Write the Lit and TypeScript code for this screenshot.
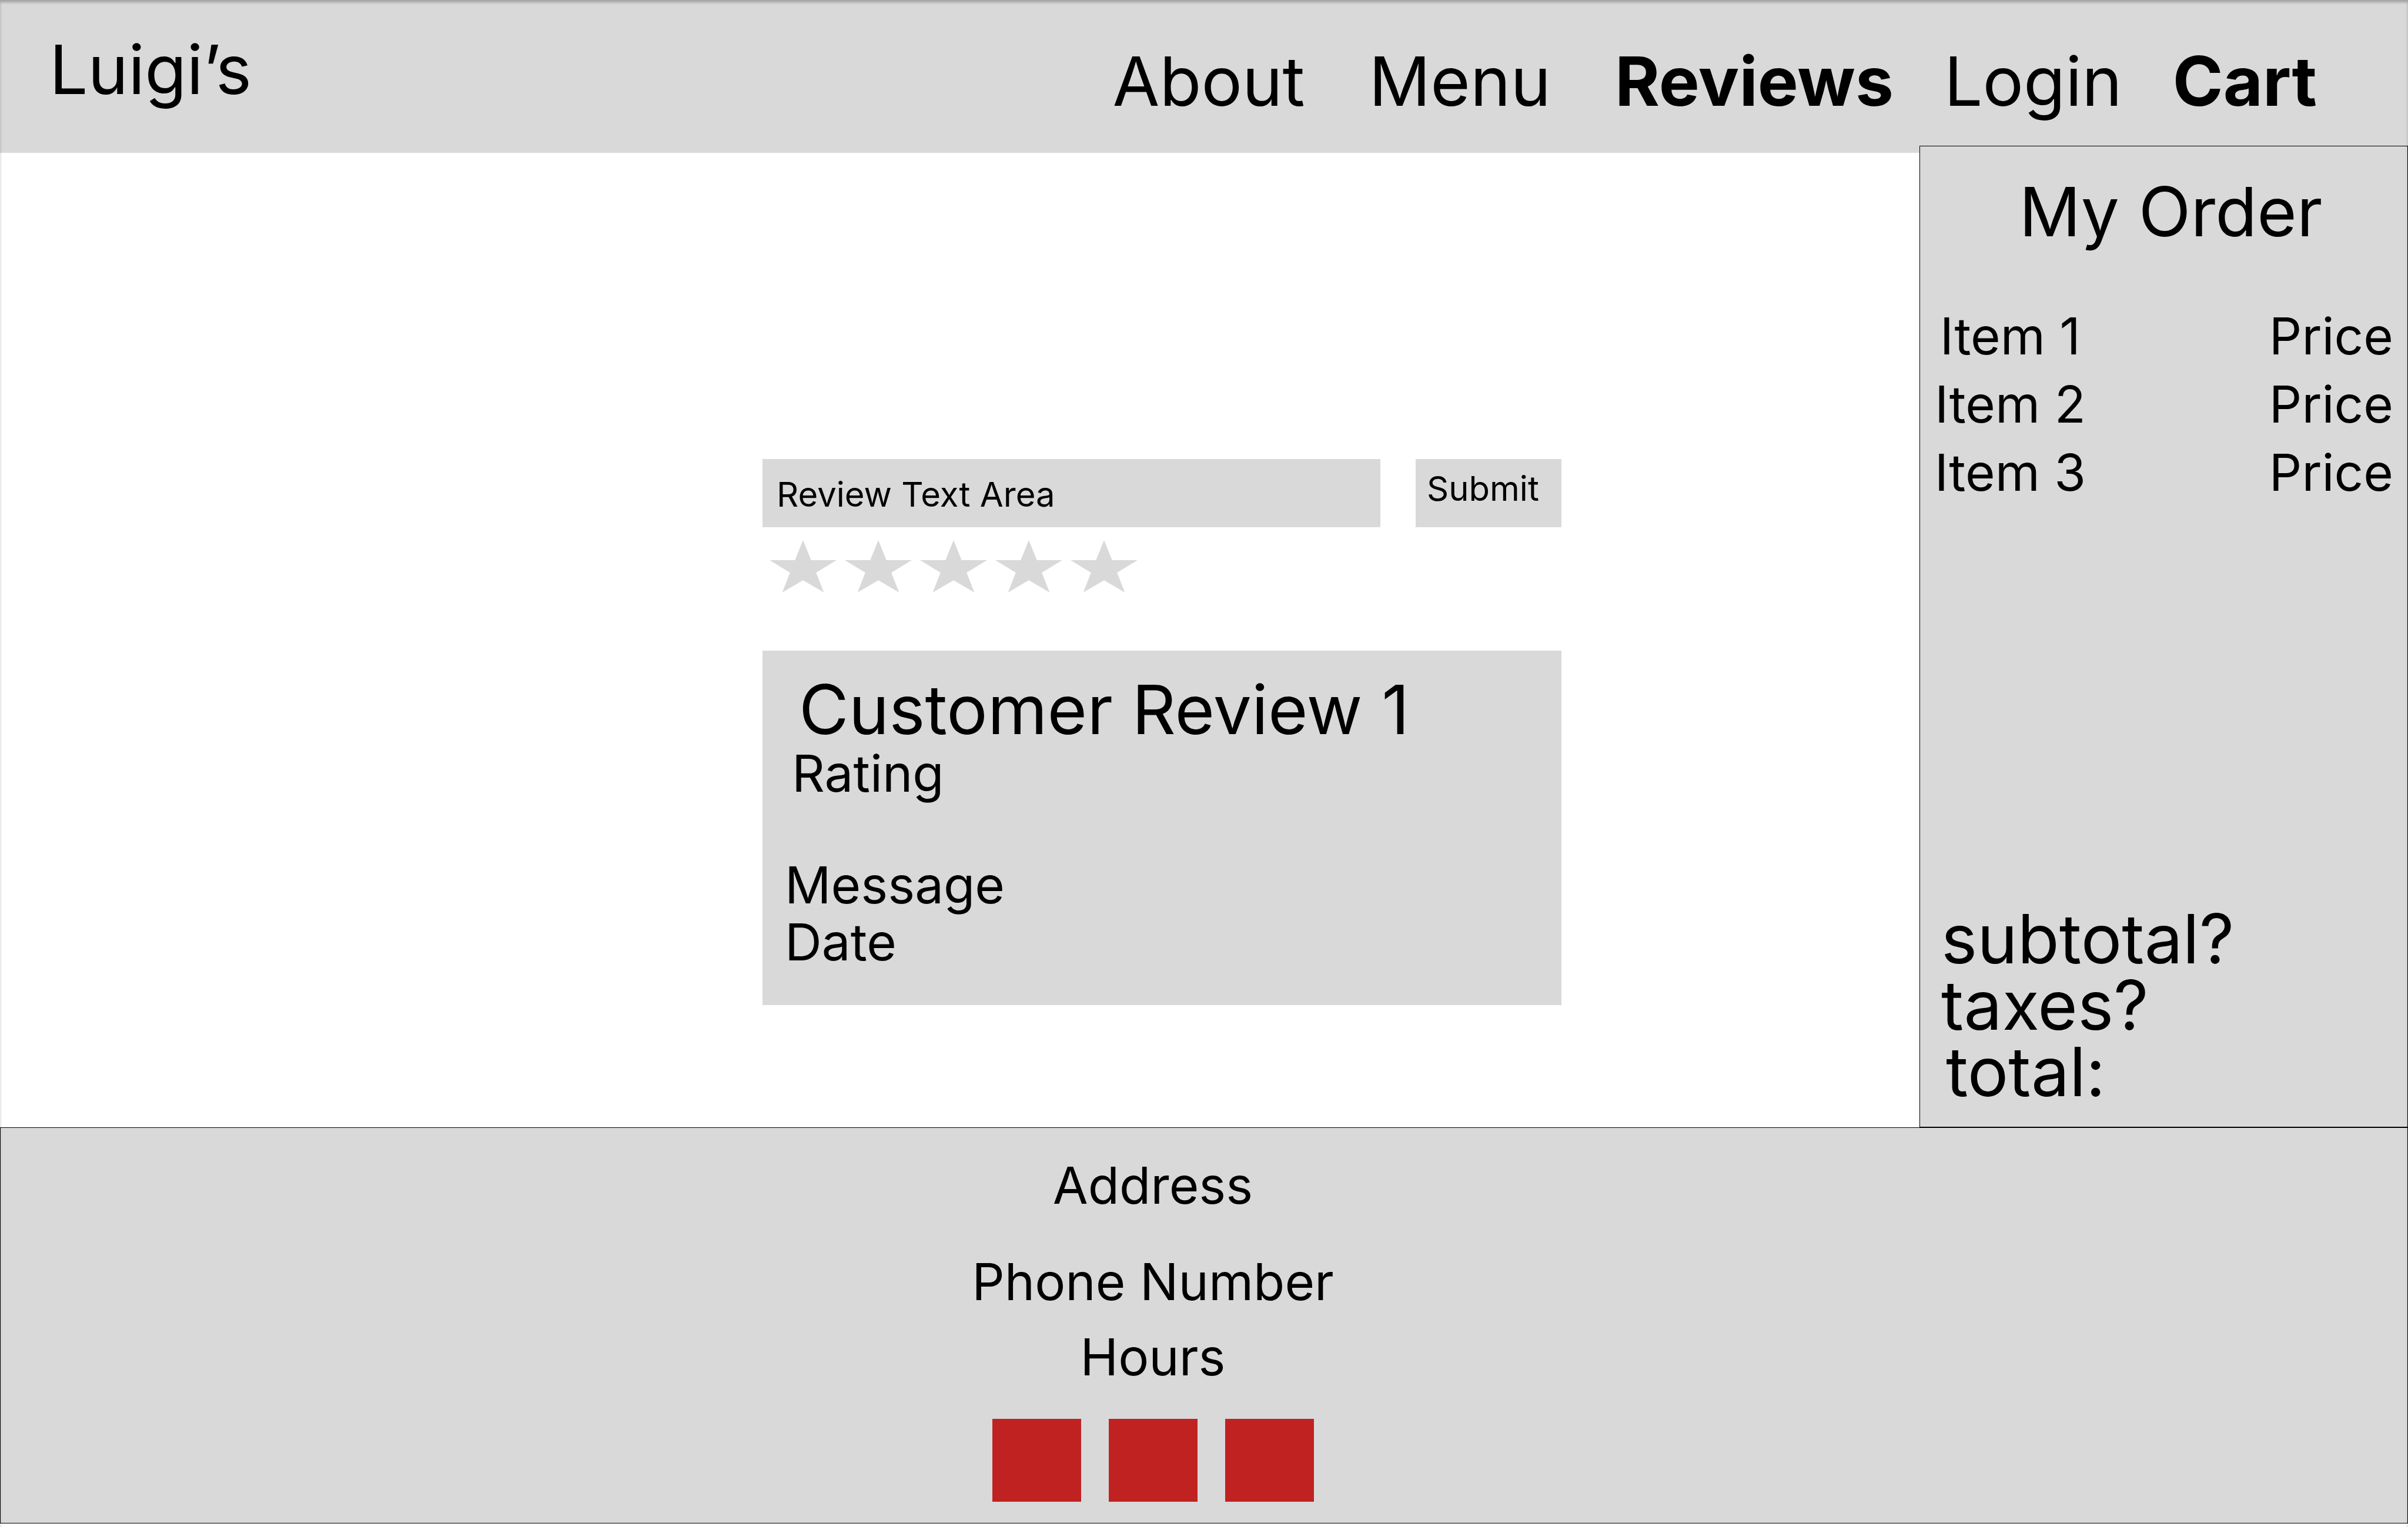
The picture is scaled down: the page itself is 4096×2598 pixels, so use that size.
import { LitElement, html, css } from "lit";
import { customElement, state } from "lit/decorators.js";

const INK = css`#000`;
const PANEL = css`#d9d9d9`;

@customElement("site-header")
export class SiteHeader extends LitElement {
  static styles = css`
    :host {
      display: block;
      background: ${PANEL};
    }
    .bar {
      display: flex;
      justify-content: space-between;
      align-items: flex-start;
      min-height: 260px;
      box-sizing: border-box;
      padding: 0 155px 0 84px;
      font-size: 116px;
      line-height: 140px;
    }
    .brand {
      margin: 0;
      padding-top: 48px;
      font: inherit;
    }
    .nav {
      display: flex;
      gap: 86px;
      padding-top: 68px;
    }
    .pages {
      display: flex;
      gap: 109px;
    }
    .link {
      color: ${INK};
      text-decoration: none;
    }
    .current {
      font-weight: 700;
    }
  `;

  render() {
    return html`
      <header class="bar">
        <h1 class="brand">Luigi’s</h1>
        <nav class="nav">
          <div class="pages">
            <a class="link" href="#about">About</a>
            <a class="link" href="#menu">Menu</a>
            <a class="link current" href="#reviews" aria-current="page">Reviews</a>
          </div>
          <a class="link" href="#login">Login</a>
          <a class="link current" href="#cart">Cart</a>
        </nav>
      </header>
    `;
  }
}

@customElement("review-form")
export class ReviewForm extends LitElement {
  @state() private rating = 0;

  static styles = css`
    :host {
      display: block;
    }
    .form {
      display: flex;
      flex-direction: column;
      gap: 22px;
      margin: 0;
    }
    .entry {
      display: grid;
      grid-template-columns: minmax(0, 1fr) 248px;
      gap: 60px;
    }
    .message,
    .submit {
      box-sizing: border-box;
      height: 116px;
      margin: 0;
      border: 0;
      border-radius: 0;
      background: ${PANEL};
      color: ${INK};
      font: inherit;
      font-size: 58px;
      line-height: 96px;
    }
    .message {
      width: 100%;
      padding: 12px 24px 8px;
      resize: none;
      overflow: hidden;
    }
    .message::placeholder {
      color: ${INK};
      opacity: 1;
    }
    .submit {
      padding: 2px 19px 18px;
      text-align: left;
      cursor: pointer;
    }
    .stars {
      display: flex;
      gap: 14px;
      margin: 0;
      padding: 0 12px;
      border: 0;
    }
    .star {
      appearance: none;
      flex: none;
      width: 114px;
      height: 89px;
      margin: 0;
      background: ${PANEL};
      clip-path: polygon(
        50% 0,
        62% 38.2%,
        100% 38.2%,
        69.5% 62%,
        81% 100%,
        50% 76.6%,
        19% 100%,
        30.5% 62%,
        0 38.2%,
        38% 38.2%
      );
      cursor: pointer;
    }
    .star.on {
      background: #8c8c8c;
    }
  `;

  render() {
    return html`
      <form class="form" @submit=${(e: Event) => e.preventDefault()}>
        <div class="entry">
          <textarea
            class="message"
            rows="1"
            aria-label="Review Text Area"
            placeholder="Review Text Area"
          ></textarea>
          <button class="submit" type="submit">Submit</button>
        </div>
        <fieldset class="stars" aria-label="Rating">
          ${[1, 2, 3, 4, 5].map(
            (n) => html`
              <input
                class="star ${n <= this.rating ? "on" : ""}"
                type="radio"
                name="rating"
                value=${n}
                aria-label="Rating ${n}"
                @change=${() => (this.rating = n)}
              />
            `
          )}
        </fieldset>
      </form>
    `;
  }
}

@customElement("review-card")
export class ReviewCard extends LitElement {
  static styles = css`
    :host {
      display: block;
      background: ${PANEL};
    }
    .card {
      padding: 40px 38px 59px;
      font-size: 87px;
      line-height: 97px;
    }
    .title {
      margin: 0;
      padding-left: 24px;
      font-weight: 400;
      font-size: 116px;
      line-height: 120px;
    }
    .rating {
      margin: 0 0 93px;
      padding-left: 12px;
    }
    .text {
      margin: 0;
    }
  `;

  render() {
    return html`
      <article class="card">
        <h2 class="title">Customer Review 1</h2>
        <p class="rating">Rating</p>
        <p class="text">Message</p>
        <p class="text">Date</p>
      </article>
    `;
  }
}

@customElement("order-panel")
export class OrderPanel extends LitElement {
  static styles = css`
    :host {
      display: flex;
      flex-direction: column;
      box-sizing: border-box;
      border: 1px solid ${INK};
      background: ${PANEL};
      padding: 41px 0 37px;
    }
    .title {
      margin: 0 0 84px;
      padding-left: 24px;
      text-align: center;
      font-weight: 400;
      font-size: 116px;
      line-height: 140px;
    }
    .items {
      width: 100%;
      border-collapse: collapse;
      font-size: 87px;
      line-height: 116px;
    }
    .name,
    .price {
      padding: 0;
      font-weight: 400;
    }
    .name {
      width: 37%;
      text-align: center;
    }
    .price {
      padding-right: 24px;
      text-align: right;
    }
    .totals {
      margin-top: auto;
      padding-left: 36px;
      font-size: 116px;
      line-height: 113px;
    }
    .line {
      margin: 0;
    }
    .total {
      padding-left: 8px;
    }
  `;

  private items = ["Item 1", "Item 2", "Item 3"];

  render() {
    return html`
      <h2 class="title">My Order</h2>
      <table class="items">
        <tbody>
          ${this.items.map(
            (item) => html`
              <tr>
                <th class="name" scope="row">${item}</th>
                <td class="price">Price</td>
              </tr>
            `
          )}
        </tbody>
      </table>
      <div class="totals">
        <p class="line">subtotal?</p>
        <p class="line">taxes?</p>
        <p class="line total">total:</p>
      </div>
    `;
  }
}

@customElement("site-footer")
export class SiteFooter extends LitElement {
  static styles = css`
    :host {
      display: block;
      border: 1px solid ${INK};
      background: ${PANEL};
    }
    .footer {
      display: flex;
      flex-direction: column;
      align-items: center;
      padding: 49px 174px 36px 0;
      font-size: 87px;
      line-height: 97px;
    }
    .row {
      margin: 0;
    }
    .address {
      margin-bottom: 67px;
    }
    .phone {
      margin-bottom: 31px;
    }
    .social {
      display: flex;
      gap: 47px;
      margin-top: 57px;
    }
    .tile {
      width: 151px;
      height: 141px;
      background: #c02222;
    }
  `;

  render() {
    return html`
      <footer class="footer">
        <p class="row address">Address</p>
        <p class="row phone">Phone Number</p>
        <p class="row">Hours</p>
        <div class="social">
          ${[1, 2, 3].map(
            (n) => html`<a class="tile" href="#social-${n}" aria-label="Social link ${n}"></a>`
          )}
        </div>
      </footer>
    `;
  }
}

@customElement("app-root")
export class AppRoot extends LitElement {
  static styles = css`
    :host {
      display: block;
      position: relative;
      box-sizing: border-box;
      min-height: 100vh;
      padding-bottom: 6px;
      background: #fff;
      color: ${INK};
      font-family: Inter, "Liberation Sans", sans-serif;
    }
    /* Inner shadow of the page frame, laid over every section. */
    :host::after {
      content: "";
      position: absolute;
      inset: 0;
      box-shadow: inset 0 4px 4px rgba(0, 0, 0, 0.25);
      pointer-events: none;
    }
    .body {
      display: grid;
      grid-template-columns: minmax(0, 3265fr) minmax(0, 831fr);
    }
    .reviews {
      display: grid;
      grid-template-columns: 1297fr minmax(0, 1359fr) 609fr;
      padding: 521px 0 208px;
    }
    .column {
      grid-column: 2;
      display: flex;
      flex-direction: column;
      gap: 99px;
    }
    .order {
      margin-top: -12px;
    }
  `;

  render() {
    return html`
      <site-header></site-header>
      <div class="body">
        <main class="reviews">
          <div class="column">
            <review-form></review-form>
            <review-card></review-card>
          </div>
        </main>
        <order-panel class="order"></order-panel>
      </div>
      <site-footer></site-footer>
    `;
  }
}
